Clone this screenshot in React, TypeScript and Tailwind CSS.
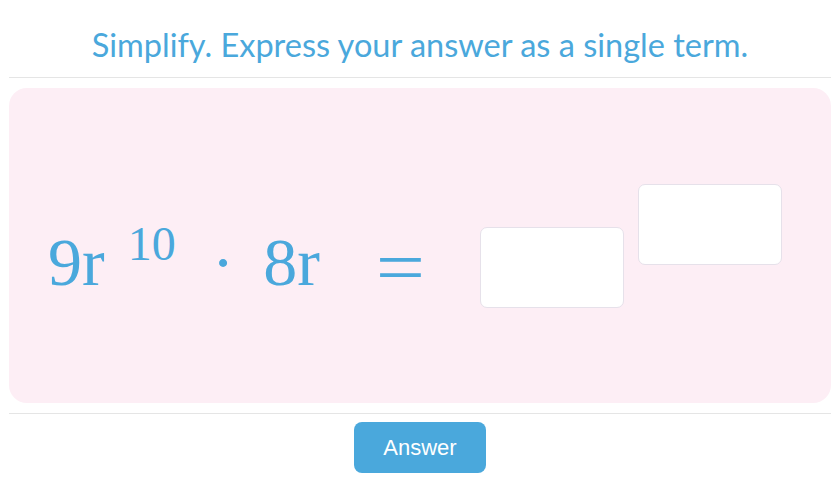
import React from 'react';

const mathFont = { fontFamily: '"Liberation Serif", "Times New Roman", serif' };

const AnswerBox: React.FC<{ className?: string }> = ({ className = '' }) => (
  <input
    type="text"
    className={`w-[144px] h-[81px] bg-white border border-[#e6e1ea] rounded-[7px] outline-none ${className}`}
  />
);

const App: React.FC = () => {
  return (
    <div className="w-[840px] h-[501px] bg-white px-[9px] flex flex-col">
      <h1 className="h-[78px] pt-[25px] text-center text-[32.5px] leading-[40px] text-[#4aa8dc] font-['Lato',sans-serif] border-b border-[#e5e5e5]">
        Simplify. Express your answer as a single term.
      </h1>

      <div className="mt-[10px] h-[315px] bg-[#fdeef5] rounded-[18px] flex items-center pl-[39px]">
        <div className="flex items-start h-[123px] text-[#4aa8dc]" style={mathFont}>
          <span className="mt-[44px] text-[68px] leading-none">9r</span>
          <span className="mt-[36px] ml-[23px] text-[48px] leading-none">10</span>
          <span className="mt-[44px] ml-[36px] text-[68px] leading-none">·</span>
          <span className="mt-[44px] ml-[29px] text-[68px] leading-none">8r</span>
          <span className="mt-[45px] ml-[59px] text-[76px] leading-none inline-block scale-x-[1.15]">=</span>
          <AnswerBox className="mt-[43px] ml-[58px]" />
          <AnswerBox className="ml-[14px]" />
        </div>
      </div>

      <div className="mt-[10px] border-t border-[#e5e5e5] flex justify-center pt-[8px]">
        <button className="w-[132px] h-[51px] rounded-[8px] bg-[#4aa8dc] text-white text-[22px] font-['Liberation_Sans',Arial,sans-serif]">
          Answer
        </button>
      </div>
    </div>
  );
};

export default App;
